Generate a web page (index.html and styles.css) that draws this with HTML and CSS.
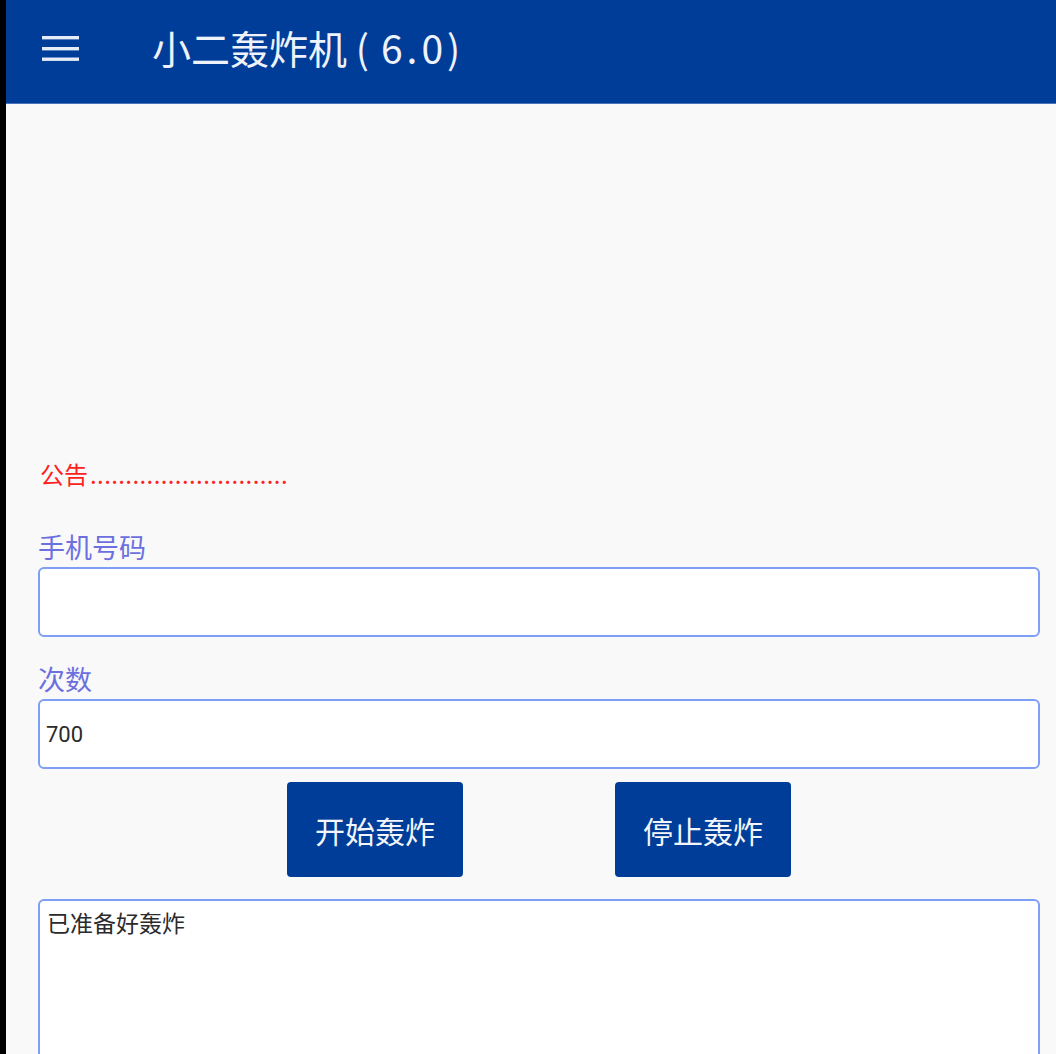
FILE: index.html
```html
<!DOCTYPE html>
<html lang="zh">
<head>
<meta charset="utf-8">
<title>小二轰炸机</title>
<link rel="stylesheet" href="styles.css">
</head>
<body>
<div class="frame">
  <header class="appbar">
    <svg class="menu" width="40" height="30" viewBox="0 0 40 30">
      <rect x="1" y="3" width="37" height="3.4" fill="#e6ecf7"/>
      <rect x="1" y="14" width="37" height="3.4" fill="#e6ecf7"/>
      <rect x="1" y="24.5" width="37" height="3.4" fill="#e6ecf7"/>
    </svg>
    <h1 class="title">小二轰炸机 <span class="paren">(</span><span class="version">6.0)</span></h1>
  </header>
  <main class="content">
    <p class="notice">公告<span class="dots">............................</span></p>
    <label class="label">手机号码</label>
    <div class="field"></div>
    <label class="label label-second">次数</label>
    <div class="field"><span class="value">700</span></div>
    <div class="actions">
      <button class="btn">开始轰炸</button>
      <button class="btn">停止轰炸</button>
    </div>
    <div class="log">已准备好轰炸</div>
  </main>
</div>
</body>
</html>
```
FILE: styles.css
```css
html, body {
  margin: 0;
  padding: 0;
  height: 100%;
  overflow: hidden;
  background: #000;
}
.frame {
  margin-left: 6px;
  height: 100%;
  background: #f9f9f9;
  font-family: "Noto Sans CJK SC", "Noto Sans", sans-serif;
}
.appbar {
  height: 103px;
  background: #003d98;
  border-bottom: 1px solid #4c72bb;
  display: flex;
  align-items: center;
  box-sizing: content-box;
}
.menu {
  margin-left: 35px;
  margin-top: -8px;
}
.title {
  margin: -8px 0 0 71px;
  font-size: 39px;
  font-weight: 400;
  color: #eef2fa;
  line-height: 1;
  white-space: pre;
}
.paren {
  margin-right: 12px;
}
.version {
  letter-spacing: 4px;
}
.content {
  padding: 0 16px 0 32px;
  display: flex;
  flex-direction: column;
}
.notice {
  margin: 355px 0 0 2px;
  font-size: 24px;
  line-height: 30px;
  color: #ff1f1f;
}
.dots {
  margin-left: 2px;
  letter-spacing: 0.4px;
}
.label {
  margin-top: 41px;
  font-size: 27px;
  line-height: 34px;
  color: #6c70df;
}
.label-second {
  margin-top: 25px;
}
.field {
  margin-top: 3px;
  height: 70px;
  box-sizing: border-box;
  border: 2px solid #7d9ff5;
  border-radius: 6px;
  background: #fff;
  display: flex;
  align-items: center;
  padding-left: 6px;
}
.value {
  font-family: Roboto, "Liberation Sans", sans-serif;
  font-size: 22px;
  color: #2b2b2b;
}
.actions {
  margin-top: 13px;
  display: flex;
  justify-content: center;
  gap: 152px;
}
.btn {
  width: 176px;
  height: 95px;
  border: none;
  border-radius: 4px;
  background: #003d98;
  color: #f2f5fb;
  font-family: "Noto Sans CJK SC", sans-serif;
  font-size: 30px;
  padding: 0;
}
.log {
  margin-top: 22px;
  height: 300px;
  box-sizing: border-box;
  border: 2px solid #7d9ff5;
  border-radius: 6px;
  background: #fff;
  padding: 6px 7px;
  font-size: 23px;
  line-height: 30px;
  color: #2b2b2b;
}
```
